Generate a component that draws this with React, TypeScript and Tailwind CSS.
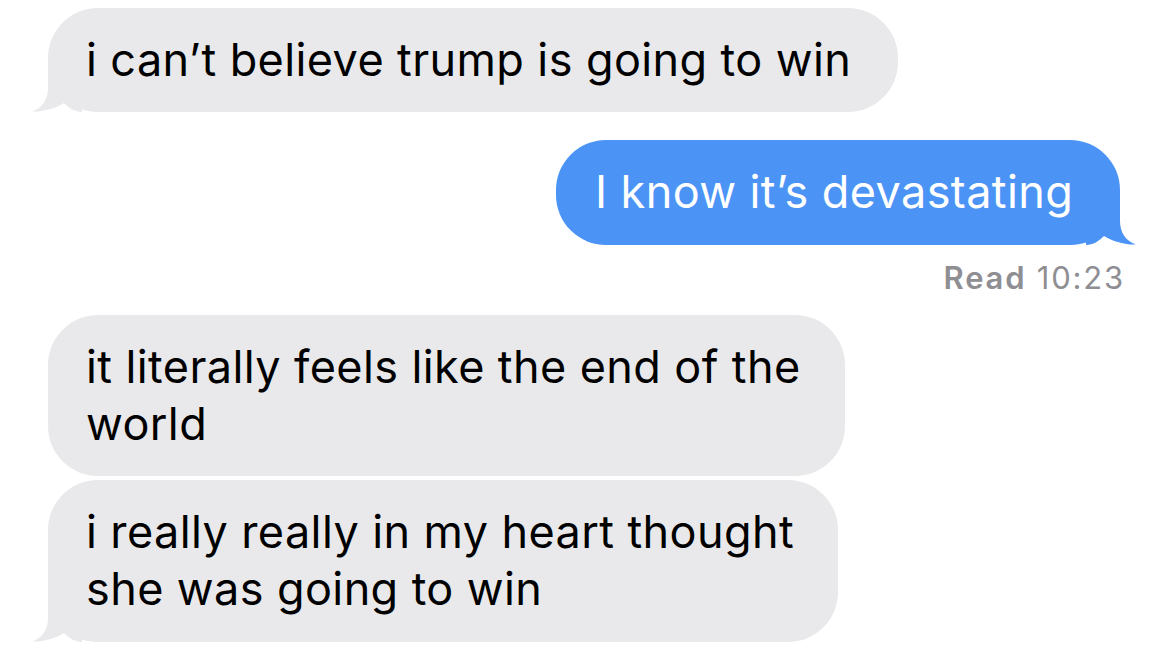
import type { ReactNode } from 'react';

const Tail = ({ color, flip }: { color: string; flip?: boolean }) => (
  <svg
    width="50"
    height="50"
    viewBox="0 0 50 50"
    className={`absolute bottom-0 ${flip ? '-right-[16px] -scale-x-100' : '-left-[16px]'}`}
  >
    <path
      d="M16 0 L16 26 C16 38 10 46 0 49.5 C10 50 22 47 32 41 C37 46 43 50 50 50 L50 0 Z"
      fill={color}
    />
  </svg>
);

const Incoming = ({ width, height, tail, children }: { width: string; height: string; tail?: boolean; children: ReactNode }) => (
  <div className={`relative ml-[48px] rounded-[50px] bg-[#e9e9eb] pl-[38px] pt-[23px] text-black ${width} ${height}`}>
    {tail && <Tail color="#e9e9eb" />}
    <p className="relative whitespace-nowrap">{children}</p>
  </div>
);

export default function App() {
  return (
    <div className="flex h-[652px] w-[1170px] flex-col overflow-hidden bg-white font-['Inter',sans-serif] text-[45px] leading-[57px] tracking-[0.4px]">
      <div className="mt-[8px]">
        <Incoming width="w-[850px]" height="h-[104px]" tail>
          i can’t believe trump is going to win
        </Incoming>
      </div>

      <div className="relative mr-[50px] mt-[28px] h-[105px] w-[564px] self-end rounded-[50px] bg-[#4b94f6] pl-[39px] pt-[23px] text-white">
        <Tail color="#4b94f6" flip />
        <p className="relative whitespace-nowrap">I know it’s devastating</p>
      </div>

      <div className="mr-[45px] mt-[15px] self-end text-[31px] leading-[36px] tracking-[1.8px] text-[#8e8e93]">
        <span className="font-semibold">Read</span> 10:23
      </div>

      <div className="mt-[19px]">
        <Incoming width="w-[797px]" height="h-[161px]">
          it literally feels like the end of the
          <br />
          world
        </Incoming>
      </div>

      <div className="mt-[4px]">
        <Incoming width="w-[790px]" height="h-[162px]" tail>
          i really really in my heart thought
          <br />
          she was going to win
        </Incoming>
      </div>
    </div>
  );
}
